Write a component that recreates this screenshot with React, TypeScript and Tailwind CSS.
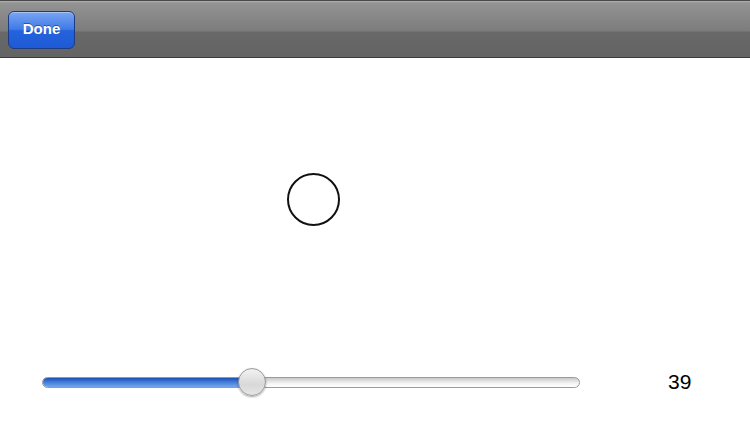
import React from 'react';

const value = 39;
const min = 0;
const max = 100;

function NavBar() {
  return (
    <div className="h-[58px] border-t border-t-[#4a4a4a] border-b border-b-[#3c3c3c] bg-[linear-gradient(to_bottom,#b0b0b0_0px,#939393_2px,#7c7c7c_30px,#686868_31px,#646464_100%)] flex items-center px-2">
      <button className="h-[38px] w-[67px] mt-[1px] rounded-[6px] border border-[#1d3a85] bg-[linear-gradient(to_bottom,#7aa6f2_0%,#3f7ae8_48%,#2463dd_52%,#1f5ad6_100%)] shadow-[inset_0_1px_0_rgba(255,255,255,0.35)] text-white text-[15px] font-bold font-['Liberation_Sans',Arial,sans-serif] [text-shadow:0_-1px_0_rgba(0,0,0,0.4)]">
        Done
      </button>
    </div>
  );
}

function Slider() {
  const pct = (value - min) / (max - min);
  const trackWidth = 538;
  const thumbX = pct * trackWidth;
  return (
    <div className="relative w-[538px] h-[30px] flex items-center">
      <div className="w-full h-[11px] rounded-full border border-[#9a9a9a] bg-[linear-gradient(to_bottom,#c9c9c9,#f4f4f4_60%,#ffffff)] overflow-hidden">
        <div
          className="h-full bg-[linear-gradient(to_bottom,#1d4fb0,#3f7ddb_45%,#78a6ea)] border-r border-[#1d4fb0]"
          style={{ width: thumbX }}
        />
      </div>
      <div
        className="absolute top-[1px] w-[28px] h-[28px] rounded-full border border-[#9a9a9a] bg-[linear-gradient(to_bottom,#f2f2f2,#d8d8d8_60%,#e6e6e6)] shadow-[0_1px_2px_rgba(0,0,0,0.35)]"
        style={{ left: thumbX - 14 }}
      />
    </div>
  );
}

export default function App() {
  return (
    <div className="w-[750px] h-[423px] bg-white flex flex-col overflow-hidden font-['Liberation_Sans',Arial,sans-serif]">
      <NavBar />
      <div className="flex-1 relative">
        <div className="absolute left-[287px] top-[115px] w-[53px] h-[53px] rounded-full border-[2px] border-[#111]" />
      </div>
      <div className="h-[56px] flex items-start pl-[42px]">
        <Slider />
        <div className="ml-[88px] mt-[1px] text-[21px] text-black leading-[28px]">{value}</div>
      </div>
    </div>
  );
}
